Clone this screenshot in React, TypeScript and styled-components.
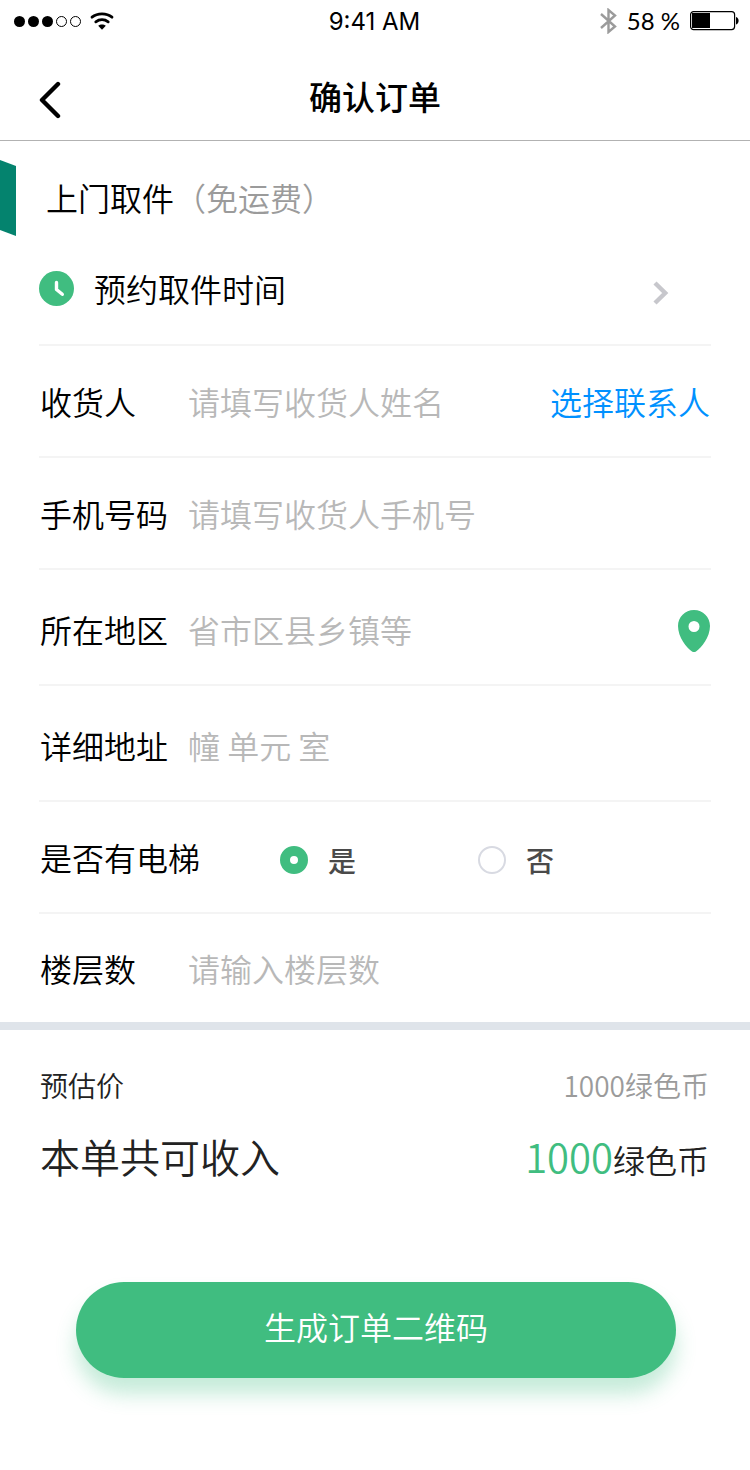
import React from 'react';
import styled, { createGlobalStyle } from 'styled-components';

const color = {
  green: '#40bd80',
  teal: '#04836e',
  ink: '#000000',
  text: '#222222',
  muted: '#9b9b9b',
  placeholder: '#b8b8b8',
  link: '#0091ff',
  line: '#f4f4f4',
};

const GlobalStyle = createGlobalStyle`
  *, *::before, *::after { box-sizing: border-box; }
  body {
    margin: 0;
    background: #fff;
    color: ${color.ink};
    font-family: 'Noto Sans CJK SC', sans-serif;
    font-size: 32px;
    font-weight: 350;
    line-height: 48px;
  }
  button, input {
    font: inherit;
    color: inherit;
    border: 0;
    padding: 0;
    margin: 0;
    background: none;
  }
  button { cursor: pointer; }
  svg { display: block; flex: none; }
`;

const Screen = styled.div`
  min-height: 100vh;
  background: #fff;
`;

const StatusBar = styled.div`
  display: grid;
  grid-template-columns: 1fr auto 1fr;
  align-items: center;
  height: 42px;
  padding: 0 11px 0 14px;
`;

const StatusGroup = styled.div<{ $end?: boolean }>`
  display: flex;
  align-items: center;
  gap: ${(p) => (p.$end ? 10 : 8)}px;
  justify-content: ${(p) => (p.$end ? 'flex-end' : 'flex-start')};
`;

const Clock = styled.time`
  padding: 2px 4px 0 0;
  font-family: Inter, sans-serif;
  font-size: 24px;
  line-height: 32px;
  font-weight: 400;
`;

const BatteryText = styled.span`
  font-family: Lato, sans-serif;
  font-size: 24px;
  line-height: 32px;
  font-weight: 400;
`;

const NavBar = styled.header`
  display: grid;
  grid-template-columns: 1fr auto 1fr;
  align-items: center;
  height: 99px;
  padding: 10px 38px 0;
  border-bottom: 1px solid #b2b2b2;
`;

const BackButton = styled.button`
  justify-self: start;
  padding-top: 8px;
`;

const Title = styled.h1`
  margin: 0;
  font-size: 33px;
  line-height: 48px;
  font-weight: 500;
`;

const Method = styled.section`
  display: flex;
  align-items: flex-start;
  gap: 30px;
  height: 93px;
  padding-top: 19px;
`;

const MethodTitle = styled.h2`
  margin: 0;
  padding-top: 13px;
  font-size: 32px;
  line-height: 48px;
  font-weight: inherit;
`;

const Note = styled.span`
  color: ${color.muted};
`;

const Form = styled.form`
  margin: 0;
`;

const Fields = styled.div`
  padding: 0 39px;
`;

const Row = styled.div<{ $tall?: boolean; $last?: boolean }>`
  display: flex;
  align-items: center;
  height: ${(p) => (p.$tall ? 116 : p.$last ? 108 : 112)}px;
  padding: ${(p) => (p.$tall ? '4px 1px 0' : '0 1px')};
  border-bottom: ${(p) => (p.$last ? 'none' : `2px solid ${color.line}`)};
`;

const TimeButton = styled.button`
  display: flex;
  align-items: center;
  width: 100%;
  height: 112px;
  gap: 20px;
  padding: 0 42px 2px 0;
  border-bottom: 2px solid ${color.line};
  text-align: left;
  svg:last-child {
    margin-top: 10px;
  }
`;

const Grow = styled.span`
  flex: 1;
`;

const Label = styled.label`
  flex: none;
  width: 148px;
`;

const TextInput = styled.input`
  flex: 1;
  min-width: 0;
  height: 48px;
  outline: none;
  &::placeholder {
    color: ${color.placeholder};
    opacity: 1;
  }
`;

const ContactLink = styled.a`
  flex: none;
  color: ${color.link};
  text-decoration: none;
`;

const IconButton = styled.button`
  flex: none;
  padding-top: 4px;
`;

const RadioRow = styled.fieldset`
  display: flex;
  align-items: center;
  height: 112px;
  margin: 0;
  padding: 0 1px;
  border: 0;
  border-bottom: 2px solid ${color.line};
`;

const Legend = styled.legend`
  float: left;
  width: 240px;
  padding: 0;
`;

const Option = styled.label`
  display: flex;
  align-items: center;
  gap: 20px;
  width: 198px;
  padding-top: 5px;
  color: #4a4a4a;
  font-size: 28px;
  line-height: 40px;
  font-weight: 500;
`;

const Radio = styled.input`
  appearance: none;
  width: 28px;
  height: 28px;
  border: 2px solid #d8dae2;
  border-radius: 50%;
  background: #fff;
  &:checked {
    border: 10px solid ${color.green};
  }
`;

const Summary = styled.dl`
  margin: 0;
  padding: 31px 41px 0 40px;
  border-top: 8px solid #dfe4ea;
  color: ${color.text};
`;

const SummaryRow = styled.div<{ $total?: boolean }>`
  display: flex;
  align-items: baseline;
  justify-content: space-between;
  margin-bottom: ${(p) => (p.$total ? 0 : 15)}px;
  font-size: ${(p) => (p.$total ? 40 : 28)}px;
  line-height: ${(p) => (p.$total ? 64 : 48)}px;
`;

const Amount = styled.dd<{ $total?: boolean }>`
  margin: 0;
  color: ${(p) => (p.$total ? color.text : color.muted)};
  font-size: ${(p) => (p.$total ? 32 : 28)}px;
`;

const Figure = styled.strong`
  color: ${color.green};
  font-size: 40px;
  font-weight: inherit;
`;

const Footer = styled.div`
  display: flex;
  justify-content: center;
  padding: 91px 74px 92px 76px;
`;

const SubmitButton = styled.button`
  width: 100%;
  height: 96px;
  padding-bottom: 8px;
  border-radius: 48px;
  background: ${color.green};
  box-shadow: 0 16px 20px rgba(64, 189, 128, 0.3);
  color: #fff;
`;

const SignalDots = () => (
  <svg width="68" height="12" viewBox="0 0 68 12" aria-hidden="true">
    {[0, 1, 2, 3, 4].map((i) => (
      <circle
        key={i}
        cx={5.5 + i * 14}
        cy="6.5"
        r={i < 3 ? 5.5 : 5}
        fill={i < 3 ? '#000' : 'none'}
        stroke={i < 3 ? 'none' : '#000'}
      />
    ))}
  </svg>
);

const WifiIcon = () => (
  <svg width="24" height="18" viewBox="0 0 24 18" fill="none" stroke="#000" strokeWidth="2.8" strokeLinecap="round" aria-hidden="true">
    <path d="M2 5.200C7.500 .8 16.500 .8 22 5.200" />
    <path d="M5.800 9.800C9.500 7 14.500 7 18.200 9.800" />
    <path d="M8.200 13.800C10.300 12 13.700 12 15.800 13.800L12 17.800Z" fill="#000" stroke="none" />
  </svg>
);

const BluetoothIcon = () => (
  <svg width="17" height="26" viewBox="0 0 17 26" fill="none" stroke="#9b9b9b" strokeWidth="2.4" aria-hidden="true">
    <path d="M1 6L15 18.500L8.500 24V2L15 7.500L1 20" />
  </svg>
);

const BatteryIcon = () => (
  <svg width="49" height="20" viewBox="0 0 49 20" aria-hidden="true">
    <rect x=".6" y=".6" width="44" height="18" rx="3" fill="none" stroke="#000" strokeWidth="1.200" />
    <rect x="2" y="2" width="18" height="15" fill="#000" />
    <path d="M46 6C49.500 7 49.500 12.500 46 13.500Z" fill="#000" />
  </svg>
);

const BackIcon = () => (
  <svg width="24" height="38" viewBox="0 0 24 38" fill="none" stroke="#000" strokeWidth="4.400" strokeLinecap="round" strokeLinejoin="round" aria-hidden="true">
    <path d="M20 3L4 19L20 35" />
  </svg>
);

const Flag = () => (
  <svg width="16" height="76" viewBox="0 0 16 76" aria-hidden="true">
    <path d="M0 0L16 6V76L0 70Z" fill={color.teal} />
  </svg>
);

const ClockIcon = () => (
  <svg width="35" height="35" viewBox="0 0 35 35" aria-hidden="true">
    <circle cx="17.500" cy="17.500" r="17.500" fill={color.green} />
    <path d="M17.500 11.500V18.500L23.300 23.300" fill="none" stroke="#fff" strokeWidth="3.400" strokeLinecap="round" strokeLinejoin="round" />
  </svg>
);

const ChevronIcon = () => (
  <svg width="16" height="24" viewBox="0 0 16 24" fill="none" stroke="#c7c7cc" strokeWidth="4.400" aria-hidden="true">
    <path d="M2 2L12.200 12L2 22" />
  </svg>
);

const PinIcon = () => (
  <svg width="32" height="42" viewBox="0 0 32 42" aria-hidden="true">
    <path
      fillRule="evenodd"
      fill={color.green}
      d="M16 0C25 0 32 7 32 16C32 27 23.500 38 18 41.400Q16 42.600 14 41.400C8.500 38 0 27 0 16C0 7 7 0 16 0ZM16 11A5.500 5.500 0 1 0 16 22A5.500 5.500 0 1 0 16 11Z"
    />
  </svg>
);

export default function App() {
  return (
    <Screen>
      <GlobalStyle />
      <StatusBar>
        <StatusGroup>
          <SignalDots />
          <WifiIcon />
        </StatusGroup>
        <Clock>9:41 AM</Clock>
        <StatusGroup $end>
          <BluetoothIcon />
          <BatteryText>58 %</BatteryText>
          <BatteryIcon />
        </StatusGroup>
      </StatusBar>

      <NavBar>
        <BackButton type="button" aria-label="返回">
          <BackIcon />
        </BackButton>
        <Title>确认订单</Title>
      </NavBar>

      <Method>
        <Flag />
        <MethodTitle>
          上门取件<Note>（免运费）</Note>
        </MethodTitle>
      </Method>

      <Form onSubmit={(e) => e.preventDefault()}>
        <Fields>
          <TimeButton type="button">
            <ClockIcon />
            <Grow>预约取件时间</Grow>
            <ChevronIcon />
          </TimeButton>
          <Row>
            <Label htmlFor="name">收货人</Label>
            <TextInput id="name" placeholder="请填写收货人姓名" />
            <ContactLink href="#contacts">选择联系人</ContactLink>
          </Row>
          <Row>
            <Label htmlFor="phone">手机号码</Label>
            <TextInput id="phone" type="tel" placeholder="请填写收货人手机号" />
          </Row>
          <Row $tall>
            <Label htmlFor="region">所在地区</Label>
            <TextInput id="region" placeholder="省市区县乡镇等" />
            <IconButton type="button" aria-label="定位">
              <PinIcon />
            </IconButton>
          </Row>
          <Row $tall>
            <Label htmlFor="address">详细地址</Label>
            <TextInput id="address" placeholder="幢 单元 室" />
          </Row>
          <RadioRow>
            <Legend>是否有电梯</Legend>
            <Option>
              <Radio type="radio" name="elevator" value="yes" defaultChecked />是
            </Option>
            <Option>
              <Radio type="radio" name="elevator" value="no" />否
            </Option>
          </RadioRow>
          <Row $last>
            <Label htmlFor="floor">楼层数</Label>
            <TextInput id="floor" inputMode="numeric" placeholder="请输入楼层数" />
          </Row>
        </Fields>

        <Summary>
          <SummaryRow>
            <dt>预估价</dt>
            <Amount>1000绿色币</Amount>
          </SummaryRow>
          <SummaryRow $total>
            <dt>本单共可收入</dt>
            <Amount $total>
              <Figure>1000</Figure>绿色币
            </Amount>
          </SummaryRow>
        </Summary>

        <Footer>
          <SubmitButton type="submit">生成订单二维码</SubmitButton>
        </Footer>
      </Form>
    </Screen>
  );
}
